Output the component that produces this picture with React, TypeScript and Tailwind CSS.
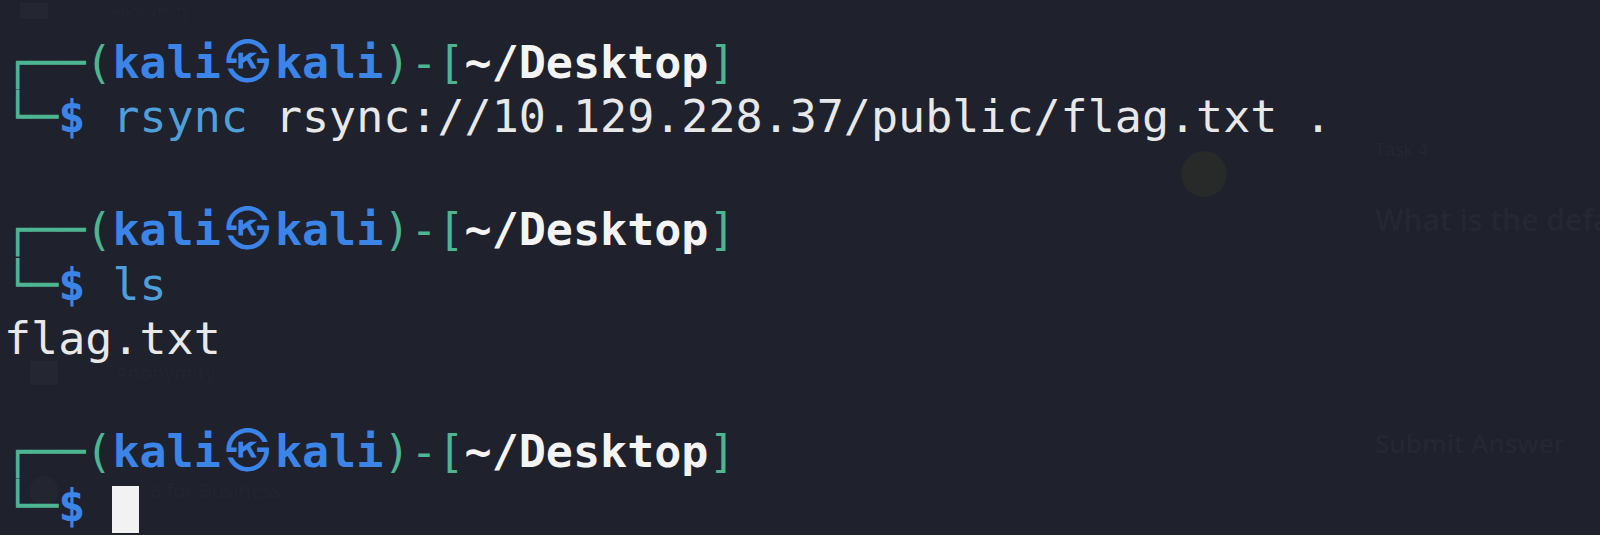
import React from 'react';

const mono = { fontFamily: '"DejaVu Sans Mono", "Noto Sans CJK KR", monospace' };

function Prompt() {
  return (
    <div className="whitespace-pre">
      <span className="text-[#4db592]">┌──(</span>
      <span className="font-bold text-[#3b84e8]">kali</span>
      <span className="inline-block w-[54.2px] text-center font-bold text-[#3b84e8]" style={{ fontFamily: '"Noto Sans CJK KR", sans-serif' }}>
        ㉿
      </span>
      <span className="font-bold text-[#3b84e8]">kali</span>
      <span className="text-[#4db592]">)-[</span>
      <span className="font-bold text-[#f4f4f4]">~/Desktop</span>
      <span className="text-[#4db592]">]</span>
    </div>
  );
}

function CommandLine({ cmd, args }: { cmd?: string; args?: string }) {
  return (
    <div className="whitespace-pre">
      <span className="text-[#4db592]">└─</span>
      <span className="font-bold text-[#3b84e8]">$</span>
      <span> </span>
      {cmd ? <span className="text-[#4f9fdb]">{cmd}</span> : null}
      {args ? <span className="text-[#e8e8e8]">{args}</span> : null}
      {!cmd ? <span className="inline-block w-[27px] h-[47px] align-[-12px] bg-[#f2f2f2]" /> : null}
    </div>
  );
}

export default function App() {
  return (
    <div className="relative w-[1600px] h-[535px] overflow-hidden bg-[#1f212c]">
      {/* faint browser page showing through the translucent terminal */}
      <div className="absolute inset-0 flex text-[#252732] whitespace-nowrap" style={{ fontFamily: '"Open Sans", sans-serif' }}>
        <div className="w-[1181px] shrink-0 flex flex-col pl-[20px]">
          <div className="flex items-center gap-[62px] h-[22px]">
            <div className="w-[28px] h-[16px] bg-[#242631]" />
            <span className="text-[16px] text-[#23252f]">Anonymity</span>
          </div>
          <div className="flex items-center gap-[57px] mt-[336px] pl-[10px]">
            <div className="w-[28px] h-[24px] bg-[#242631]" />
            <span className="text-[20px] text-[#232530]">Anonymity</span>
          </div>
          <div className="flex items-center gap-[92px] mt-[88px] pl-[10px]">
            <div className="w-[28px] h-[30px] rounded-full bg-[#232530]" />
            <span className="text-[20px] text-[#232530]">6 for Business</span>
          </div>
        </div>
        <div className="w-[194px] shrink-0 pt-[151px]">
          <div className="w-[46px] h-[46px] rounded-full bg-[#272a29]" />
        </div>
        <div className="flex flex-col pt-[136px]">
          <span className="text-[18px]">Task 4</span>
          <span className="mt-[34px] text-[30px] font-semibold">What is the default</span>
          <span className="mt-[182px] text-[26px] font-semibold">Submit Answer</span>
        </div>
      </div>

      <div className="relative pl-[4px] pt-[32px] text-[45px] leading-[54.4px]" style={mono}>
        <Prompt />
        <CommandLine cmd="rsync" args=" rsync://10.129.228.37/public/flag.txt ." />
        <div>&nbsp;</div>
        <Prompt />
        <CommandLine cmd="ls" />
        <div className="text-[#e8e8e8]">flag.txt</div>
        <div>&nbsp;</div>
        <Prompt />
        <CommandLine />
      </div>
    </div>
  );
}
